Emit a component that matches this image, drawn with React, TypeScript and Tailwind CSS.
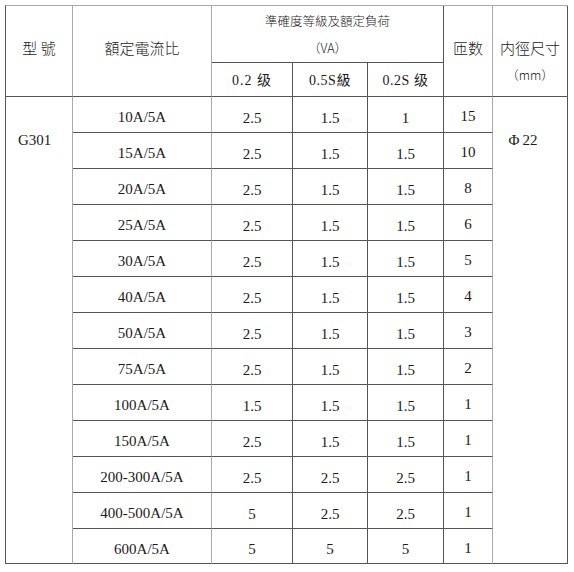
import React from "react";

const rows: [string, string, string, string, string][] = [
  ["10A/5A", "2.5", "1.5", "1", "15"],
  ["15A/5A", "2.5", "1.5", "1.5", "10"],
  ["20A/5A", "2.5", "1.5", "1.5", "8"],
  ["25A/5A", "2.5", "1.5", "1.5", "6"],
  ["30A/5A", "2.5", "1.5", "1.5", "5"],
  ["40A/5A", "2.5", "1.5", "1.5", "4"],
  ["50A/5A", "2.5", "1.5", "1.5", "3"],
  ["75A/5A", "2.5", "1.5", "1.5", "2"],
  ["100A/5A", "1.5", "1.5", "1.5", "1"],
  ["150A/5A", "2.5", "1.5", "1.5", "1"],
  ["200-300A/5A", "2.5", "2.5", "2.5", "1"],
  ["400-500A/5A", "5", "2.5", "2.5", "1"],
  ["600A/5A", "5", "5", "5", "1"],
];

const serif = "font-['Liberation_Serif','Noto_Sans_CJK_TC',serif]";
const cjk = "font-['Noto_Sans_CJK_TC',sans-serif] font-light";

export default function App() {
  return (
    <div className="w-[574px] h-[572px] bg-white text-[#1a1a1a]">
      <div className="ml-[5px] pt-[5px]">
        <div className="grid grid-cols-[67px_139px_81px_75px_76px_49px_75px] grid-rows-[57px_34px_repeat(12,36px)_35px] border-l border-t border-l-[#555] border-t-[#aaa] w-[563px]">
          {/* header */}
          <div className={`col-start-1 row-start-1 row-span-2 border-r border-b border-r-[#aaa] border-b-[#555] flex items-center justify-center pb-[5px] text-[15px] ${cjk}`}>
            型 號
          </div>
          <div className={`col-start-2 row-start-1 row-span-2 border-r border-b border-r-[#aaa] border-b-[#555] flex items-center justify-center pb-[5px] text-[15px] ${cjk}`}>
            額定電流比
          </div>
          <div className={`col-start-3 col-span-3 row-start-1 border-r border-b border-[#555] flex flex-col items-center pt-[1px] text-[12.5px] leading-[27px] ${cjk}`}>
            <div>準確度等級及額定負荷</div>
            <div>（VA）</div>
          </div>
          <div className={`col-start-6 row-start-1 row-span-2 border-r border-b border-r-[#aaa] border-b-[#555] flex items-center justify-center pb-[5px] text-[15px] ${cjk}`}>
            匝数
          </div>
          <div className={`col-start-7 row-start-1 row-span-2 border-r border-b border-[#555] flex flex-col items-center pt-[28px] text-[15px] leading-[27px] ${cjk}`}>
            <div>内徑尺寸</div>
            <div className="text-[12.5px]">（mm）</div>
          </div>
          <div className={`col-start-3 row-start-2 border-r border-b border-[#555] flex items-center justify-center pt-[2px] text-[14px] tracking-[1px] ${serif}`}>
            0.2 级
          </div>
          <div className={`col-start-4 row-start-2 border-r border-b border-[#555] flex items-center justify-center pt-[2px] text-[14px] tracking-[0.5px] ${serif}`}>
            0.5S級
          </div>
          <div className={`col-start-5 row-start-2 border-r border-b border-[#555] flex items-center justify-center pt-[2px] text-[14px] tracking-[0.5px] ${serif}`}>
            0.2S 级
          </div>

          {/* spanning body cells */}
          <div className={`col-start-1 row-start-3 row-span-13 border-r border-b border-r-[#aaa] border-b-[#555] pl-[12px] pt-[33px] text-[15px] leading-[20px] ${serif}`}>
            G301
          </div>
          <div className={`col-start-7 row-start-3 row-span-13 border-r border-b border-[#555] flex justify-center pt-[33px] pr-[14px] text-[15px] leading-[20px] ${serif}`}>
            <span className="tracking-[3px]">Φ</span>22
          </div>

          {rows.map((r, i) => (
            <React.Fragment key={i}>
              <div className={`col-start-2 border-r border-b border-r-[#aaa] border-b-[#555] flex items-center justify-center pt-[6px] text-[15px] ${serif}`}>
                {r[0]}
              </div>
              <div className={`col-start-3 border-r border-b border-[#555] flex items-center justify-center pt-[7px] text-[15px] ${serif}`}>
                {r[1]}
              </div>
              <div className={`col-start-4 border-r border-b border-[#555] flex items-center justify-center pt-[7px] text-[15px] ${serif}`}>
                {r[2]}
              </div>
              <div className={`col-start-5 border-r border-b border-[#555] flex items-center justify-center pt-[7px] text-[15px] ${serif}`}>
                {r[3]}
              </div>
              <div className={`col-start-6 border-r border-b border-r-[#aaa] border-b-[#555] flex items-center justify-center pt-[4px] text-[15px] ${serif}`}>
                {r[4]}
              </div>
            </React.Fragment>
          ))}
        </div>
      </div>
    </div>
  );
}
